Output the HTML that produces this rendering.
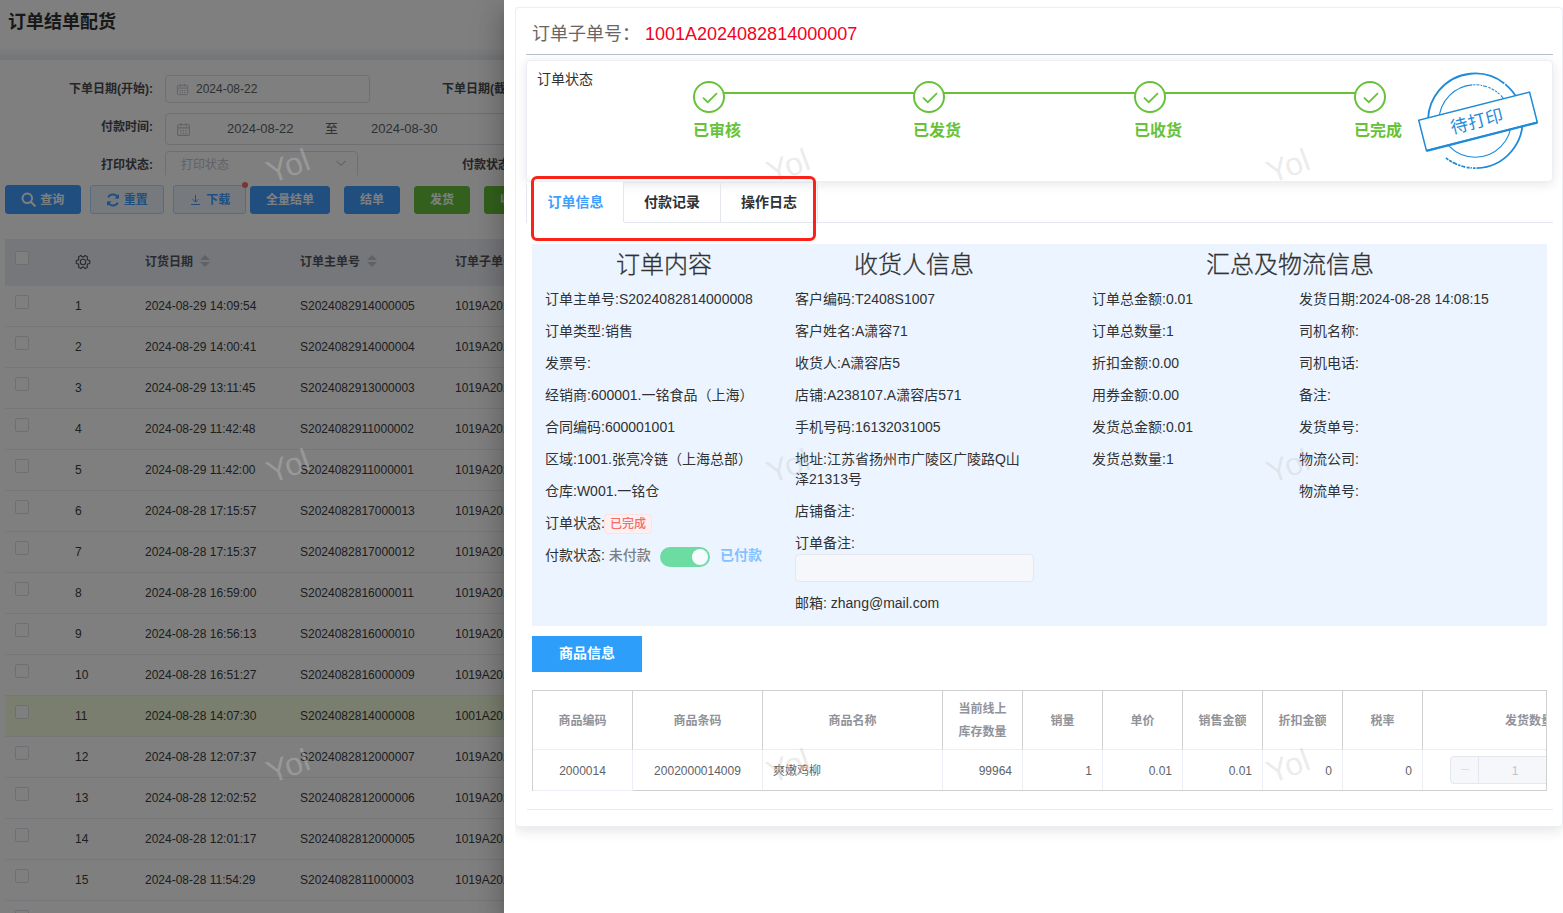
<!DOCTYPE html>
<html lang="zh-CN">
<head>
<meta charset="utf-8">
<title>订单结单配货</title>
<style>
*{box-sizing:border-box;margin:0;padding:0}
html,body{width:1563px;height:913px;overflow:hidden;background:#fff}
body{font-family:"Liberation Sans","Noto Sans CJK SC",sans-serif;font-size:12px;color:#606266;position:relative}
.abs{position:absolute}
/* ---------- left (dimmed) page ---------- */
#page{position:absolute;left:0;top:0;width:1563px;height:913px;background:#fff;overflow:hidden}
#page .hdr{position:absolute;left:0;top:0;width:100%;height:49px;background:#fff}
#page .band{position:absolute;left:0;top:49px;width:100%;height:11px;background:linear-gradient(#fafbfc,#e6e9ef)}
#page h1{position:absolute;left:8px;top:9px;font-size:18px;line-height:26px;font-weight:700;color:#303133;white-space:nowrap}
.flabel{position:absolute;font-weight:700;font-size:12px;color:#4a4c50;white-space:nowrap;line-height:20px}
.finput{position:absolute;border:1px solid #dcdfe6;border-radius:4px;background:#fff;color:#606266;white-space:nowrap}
.btn{position:absolute;top:185px;height:29px;border-radius:3px;font-size:12px;font-weight:700;color:#fff;line-height:29px;text-align:center;white-space:nowrap;border:1px solid transparent}
.btn.pri{background:#409eff;border-color:#409eff}
.btn.suc{background:#67c23a;border-color:#67c23a}
.btn.pla{background:#ecf5ff;border-color:#b3d8ff;color:#409eff}
.btn svg{vertical-align:middle;position:relative;top:-1px}
#ltable{position:absolute;left:5px;top:239px;width:1553px}
#ltable .th{position:absolute;left:0;top:0;width:100%;height:47px;background:#eceff6;font-weight:700;color:#54575c}
#ltable .tr{position:absolute;left:0;width:100%;height:41px;border-bottom:1px solid #ebeef5;color:#3a3c40}
#ltable .tr.sel{background:#f3fddc}
#ltable span{position:absolute;white-space:nowrap;line-height:20px}
.cb{position:absolute;left:10px;width:14px;height:14px;border:1px solid #dcdfe6;border-radius:2px;background:#fff}
.c1{left:70px}.c2{left:140px}.c3{left:295px}.c4{left:450px}
.sort{display:inline-block;position:relative;width:10px;height:14px;vertical-align:middle;margin-left:7px;top:-2px}
.sort:before,.sort:after{content:"";position:absolute;left:0;border:5px solid transparent}
.sort:before{top:-4px;border-bottom-color:#c0c4cc}
.sort:after{top:8px;border-top-color:#c0c4cc}
#mask{position:absolute;left:0;top:0;width:1563px;height:913px;background:rgba(0,0,0,.5)}
/* ---------- drawer ---------- */
#drawer{position:absolute;left:504px;top:0;width:1059px;height:913px;background:#fff;box-shadow:0 8px 10px -5px rgba(0,0,0,.2),0 16px 24px 2px rgba(0,0,0,.14),0 6px 30px 5px rgba(0,0,0,.12);overflow:hidden}

#clip{position:absolute;left:11px;top:7px;width:1048px;height:906px;overflow:hidden}
#card{position:absolute;left:0;top:0;width:1048px;height:820px;border:1px solid #ebeef5;border-radius:4px;background:#fff;box-shadow:0 3px 14px 0 rgba(0,0,0,.12)}
/* inside #card origin = (516,8) */
#ttl{position:absolute;left:16px;top:12px;font-size:18px;line-height:28px;color:#666;white-space:nowrap}
#ttl b{font-weight:400;color:#f5001d;position:absolute;left:113px;top:0}
#ttlline{position:absolute;left:10px;top:46px;width:1027px;height:1px;background:#b4c0d4}
#scard{position:absolute;left:10px;top:52px;width:1027px;height:122px;border:1px solid #ebeef5;border-radius:4px;background:#fff;box-shadow:0 2px 12px 0 rgba(0,0,0,.1)}
#scard .lab{position:absolute;left:10px;top:8px;font-size:14px;line-height:20px;color:#303133}
.step{position:absolute;top:20px;width:32px;height:32px;border:2px solid #67c23a;border-radius:50%;background:#fff}
.step svg{position:absolute;left:7px;top:9px}
.sline{position:absolute;top:31px;height:2px;background:#67c23a}
.stxt{position:absolute;top:59px;font-size:16px;line-height:22px;font-weight:700;color:#67c23a;white-space:nowrap}

#tabs{position:absolute;left:10px;top:174px;width:1027px;height:41px}
#tabs .bl{position:absolute;left:0;top:40px;width:1027px;height:1px;background:#e4e7ed}
#tabs .nav{position:absolute;left:0;top:0;height:41px;width:292px;border:1px solid #e4e7ed;border-bottom:none;border-radius:4px 4px 0 0}
#tabs .t{position:absolute;top:0;height:40px;width:97px;line-height:41px;font-size:14px;font-weight:700;color:#303133;text-align:center;white-space:nowrap}
#tabs .t+.t{border-left:1px solid #e4e7ed}
#tabs .t.on{color:#409eff;background:#fff;height:41px}
#panel{position:absolute;left:16px;top:236px;width:1015px;height:382px;background:#ecf5ff;color:#303133;font-size:14px}
#panel h2{position:absolute;top:7px;font-size:24px;line-height:28px;font-weight:300;color:#303133;text-align:center;white-space:nowrap;-webkit-text-stroke:.3px #303133}
#panel p{position:absolute;line-height:20px;white-space:nowrap}
.tag{display:inline-block;height:20px;line-height:18px;padding:0 5px;border:1px solid #fde2e2;background:#fef0f0;color:#f56c6c;font-size:12px;border-radius:4px;vertical-align:top;position:relative;top:1px;margin-left:-1px;font-weight:500}
.sw{position:absolute;left:128px;top:303px;width:50px;height:20px;border-radius:10px;background:#6ddca2}
.sw i{position:absolute;left:32px;top:2px;width:16px;height:16px;border-radius:50%;background:#f7faff}
#gbtn{position:absolute;left:16px;top:628px;width:110px;height:36px;background:#2d9ffb;color:#fff;font-size:14px;font-weight:700;line-height:35px;text-align:center}
#gt{position:absolute;left:16px;top:682px;width:1015px;height:101px;overflow:hidden;border:1px solid #d0d0d0;font-size:12px}
#gt .h{position:absolute;top:0;height:59px;border-right:1px solid #d0d0d0;border-bottom:1px solid #ebeef5;color:#909399;font-weight:700;text-align:center;line-height:23px}
#gt .h span{position:absolute;left:0;width:100%;top:50%;transform:translateY(-50%);margin-top:1px}
#gt .d{position:absolute;top:59px;height:40px;border-right:1px solid #ebeef5;color:#606266;line-height:42px;white-space:nowrap}
#gt .d.f{box-shadow:0 1px 0 #ebeef5}
#gt .r{text-align:right;padding-right:10px}
#gt .c{text-align:center}
#dvd{position:absolute;left:11px;top:801px;width:1026px;height:1px;background:#e6ebf2}

.wm{position:absolute;width:120px;height:40px;margin:-20px 0 0 -60px;line-height:40px;text-align:center;font-size:32px;color:rgba(200,200,200,.36);transform:rotate(-20deg);white-space:nowrap;pointer-events:none}
#redbox{position:absolute;left:531px;top:176px;width:285px;height:65px;border:3px solid #fb2219;border-radius:6px}
</style>
</head>
<body>
<div id="page">
  <div class="hdr"></div><div class="band"></div>
  <h1>订单结单配货</h1>

  <div class="flabel" style="right:1410px;top:79px">下单日期(开始):</div>
  <div class="finput" style="left:165px;top:75px;width:205px;height:28px"><svg class="abs" style="left:10px;top:7px" width="13" height="13" viewBox="0 0 14 14" fill="none" stroke="#c0c4cc" stroke-width="1"><rect x="1.5" y="2.5" width="11" height="10" rx="1"/><path d="M1.5 5.5h11M4.5 1v3M9.5 1v3"/><path d="M4 8h1.2M6.4 8h1.2M8.8 8H10M4 10.3h1.2M6.4 10.3h1.2M8.8 10.3H10" stroke-width="1.1"/></svg><span class="abs" style="left:30px;top:0;line-height:26px;font-size:12px">2024-08-22</span></div>
  <div class="flabel" style="left:442px;top:79px">下单日期(截止):</div>
  <div class="flabel" style="right:1410px;top:117px">付款时间:</div>
  <div class="finput" style="left:165px;top:113px;width:400px;height:32px"><svg class="abs" style="left:10px;top:8px" width="15" height="15" viewBox="0 0 14 14" fill="none" stroke="#c0c4cc" stroke-width="1"><rect x="1.5" y="2.5" width="11" height="10" rx="1"/><path d="M1.5 5.5h11M4.5 1v3M9.5 1v3"/><path d="M4 8h1.2M6.4 8h1.2M8.8 8H10M4 10.3h1.2M6.4 10.3h1.2M8.8 10.3H10" stroke-width="1.1"/></svg><span class="abs" style="left:61px;top:0;line-height:30px;font-size:13px">2024-08-22</span><span class="abs" style="left:159px;top:0;line-height:29px;font-size:13px">至</span><span class="abs" style="left:205px;top:0;line-height:30px;font-size:13px">2024-08-30</span></div>
  <div class="abs" style="left:0;top:148px;width:1563px;height:27px;overflow:hidden">
    <div class="flabel" style="right:1410px;top:7px">打印状态:</div>
    <div class="finput" style="left:165px;top:3px;width:193px;height:28px"><span class="abs" style="left:15px;top:0;line-height:26px;font-size:12px;color:#c0c4cc">打印状态</span><svg class="abs" style="left:169px;top:5px" width="12" height="12" viewBox="0 0 12 12" fill="none" stroke="#c0c4cc" stroke-width="1.1"><path d="M1.5 3.8 6 8.3l4.5-4.5"/></svg></div>
    <div class="flabel" style="left:462px;top:7px">付款状态:</div>
  </div>

  <div class="btn pri" style="left:5px;width:76px"><svg style="margin:0 1px 0 -1px" width="15" height="15" viewBox="0 0 15 15" fill="none" stroke="#fff" stroke-width="2"><circle cx="6.3" cy="6.3" r="4.8"/><path d="M9.8 9.8l4 4" stroke-linecap="round"/></svg> 查询</div>
  <div class="btn pla" style="left:90px;width:74px"><svg width="14" height="14" viewBox="0 0 14 14" fill="none" stroke="#409eff" stroke-width="2"><path d="M12 5.2A5.3 5.3 0 0 0 2.2 4.4"/><path d="M2 8.8a5.3 5.3 0 0 0 9.8 .8"/><path d="M13 1v4.6H8.4z" fill="#409eff" stroke="none"/><path d="M1 13V8.4h4.6z" fill="#409eff" stroke="none"/></svg> 重置</div>
  <div class="btn pla" style="left:173px;width:73px"><svg style="margin:0 2px 0 1px" width="11" height="12" viewBox="0 0 11 12" fill="none" stroke="#409eff" stroke-width="1"><path d="M5.5 1v7M2.5 5.2l3 3 3-3M1 10.5h9"/></svg> 下载</div>
  <div class="abs" style="left:242px;top:182px;width:6px;height:6px;border-radius:50%;background:#f56c6c"></div>
  <div class="btn pri" style="left:250px;width:80px;top:186px;height:28px;line-height:27px">全量结单</div>
  <div class="btn pri" style="left:344px;width:56px;top:186px;height:28px;line-height:27px">结单</div>
  <div class="btn suc" style="left:414px;width:56px;top:186px;height:28px;line-height:27px">发货</div>
  <div class="btn suc" style="left:484px;width:56px;top:186px;height:28px;line-height:27px">收货</div>
  <div id="ltable">
   <div class="th"><i class="cb" style="top:12px"></i><svg class="abs" style="left:70px;top:15px" width="16" height="16" viewBox="0 0 16 16" fill="none" stroke="#4e5156" stroke-width="1.1" stroke-linejoin="round"><circle cx="8" cy="8" r="2.7"/><path d="M12.85 6.14 L14.75 6.57 L14.75 9.43 L12.85 9.86 L12.04 11.27 L12.62 13.13 L10.13 14.56 L8.81 13.14 L7.19 13.14 L5.87 14.56 L3.38 13.13 L3.96 11.27 L3.15 9.86 L1.25 9.43 L1.25 6.57 L3.15 6.14 L3.96 4.73 L3.38 2.87 L5.87 1.44 L7.19 2.86 L8.81 2.86 L10.13 1.44 L12.62 2.87 L12.04 4.73Z"/></svg><span class="c2" style="top:13px">订货日期<i class="sort"></i></span><span class="c3" style="top:13px">订单主单号<i class="sort"></i></span><span class="c4" style="top:13px">订单子单号<i class="sort"></i></span></div>
   <div class="tr" style="top:47px"><i class="cb" style="top:9px"></i><span class="c1" style="top:10px">1</span><span class="c2" style="top:10px">2024-08-29 14:09:54</span><span class="c3" style="top:10px">S2024082914000005</span><span class="c4" style="top:10px">1019A2024082914000005</span></div>
   <div class="tr" style="top:88px"><i class="cb" style="top:9px"></i><span class="c1" style="top:10px">2</span><span class="c2" style="top:10px">2024-08-29 14:00:41</span><span class="c3" style="top:10px">S2024082914000004</span><span class="c4" style="top:10px">1019A2024082914000004</span></div>
   <div class="tr" style="top:129px"><i class="cb" style="top:9px"></i><span class="c1" style="top:10px">3</span><span class="c2" style="top:10px">2024-08-29 13:11:45</span><span class="c3" style="top:10px">S2024082913000003</span><span class="c4" style="top:10px">1019A2024082913000003</span></div>
   <div class="tr" style="top:170px"><i class="cb" style="top:9px"></i><span class="c1" style="top:10px">4</span><span class="c2" style="top:10px">2024-08-29 11:42:48</span><span class="c3" style="top:10px">S2024082911000002</span><span class="c4" style="top:10px">1019A2024082911000002</span></div>
   <div class="tr" style="top:211px"><i class="cb" style="top:9px"></i><span class="c1" style="top:10px">5</span><span class="c2" style="top:10px">2024-08-29 11:42:00</span><span class="c3" style="top:10px">S2024082911000001</span><span class="c4" style="top:10px">1019A2024082911000001</span></div>
   <div class="tr" style="top:252px"><i class="cb" style="top:9px"></i><span class="c1" style="top:10px">6</span><span class="c2" style="top:10px">2024-08-28 17:15:57</span><span class="c3" style="top:10px">S2024082817000013</span><span class="c4" style="top:10px">1019A2024082817000013</span></div>
   <div class="tr" style="top:293px"><i class="cb" style="top:9px"></i><span class="c1" style="top:10px">7</span><span class="c2" style="top:10px">2024-08-28 17:15:37</span><span class="c3" style="top:10px">S2024082817000012</span><span class="c4" style="top:10px">1019A2024082817000012</span></div>
   <div class="tr" style="top:334px"><i class="cb" style="top:9px"></i><span class="c1" style="top:10px">8</span><span class="c2" style="top:10px">2024-08-28 16:59:00</span><span class="c3" style="top:10px">S2024082816000011</span><span class="c4" style="top:10px">1019A2024082816000011</span></div>
   <div class="tr" style="top:375px"><i class="cb" style="top:9px"></i><span class="c1" style="top:10px">9</span><span class="c2" style="top:10px">2024-08-28 16:56:13</span><span class="c3" style="top:10px">S2024082816000010</span><span class="c4" style="top:10px">1019A2024082816000010</span></div>
   <div class="tr" style="top:416px"><i class="cb" style="top:9px"></i><span class="c1" style="top:10px">10</span><span class="c2" style="top:10px">2024-08-28 16:51:27</span><span class="c3" style="top:10px">S2024082816000009</span><span class="c4" style="top:10px">1019A2024082816000009</span></div>
   <div class="tr sel" style="top:457px"><i class="cb" style="top:9px"></i><span class="c1" style="top:10px">11</span><span class="c2" style="top:10px">2024-08-28 14:07:30</span><span class="c3" style="top:10px">S2024082814000008</span><span class="c4" style="top:10px">1001A2024082814000007</span></div>
   <div class="tr" style="top:498px"><i class="cb" style="top:9px"></i><span class="c1" style="top:10px">12</span><span class="c2" style="top:10px">2024-08-28 12:07:37</span><span class="c3" style="top:10px">S2024082812000007</span><span class="c4" style="top:10px">1019A2024082812000007</span></div>
   <div class="tr" style="top:539px"><i class="cb" style="top:9px"></i><span class="c1" style="top:10px">13</span><span class="c2" style="top:10px">2024-08-28 12:02:52</span><span class="c3" style="top:10px">S2024082812000006</span><span class="c4" style="top:10px">1019A2024082812000006</span></div>
   <div class="tr" style="top:580px"><i class="cb" style="top:9px"></i><span class="c1" style="top:10px">14</span><span class="c2" style="top:10px">2024-08-28 12:01:17</span><span class="c3" style="top:10px">S2024082812000005</span><span class="c4" style="top:10px">1019A2024082812000005</span></div>
   <div class="tr" style="top:621px"><i class="cb" style="top:9px"></i><span class="c1" style="top:10px">15</span><span class="c2" style="top:10px">2024-08-28 11:54:29</span><span class="c3" style="top:10px">S2024082811000003</span><span class="c4" style="top:10px">1019A2024082811000003</span></div>
   <div class="tr" style="top:662px"><i class="cb" style="top:9px"></i><span class="c1" style="top:10px">16</span><span class="c2" style="top:10px">2024-08-28 11:50:06</span><span class="c3" style="top:10px">S2024082811000002</span><span class="c4" style="top:10px">1019A2024082811000002</span></div>
  </div>
</div>
<div id="mask"></div>
<div id="drawer">
<div id="clip"><div id="card">
 <div id="ttl">订单子单号：<b>1001A2024082814000007</b></div>
 <div id="ttlline"></div>
 <div id="scard"><div class="lab">订单状态</div><div class="sline" style="left:182px;width:220px"></div><div class="sline" style="left:402px;width:221px"></div><div class="sline" style="left:623px;width:220px"></div><div class="step" style="left:166px"><svg width="16" height="12" viewBox="0 0 16 12" fill="none" stroke="#67c23a" stroke-width="1.7"><path d="M1 5.6 5.8 10.2 15 1.2"/></svg></div><div class="stxt" style="left:166px">已审核</div><div class="step" style="left:386px"><svg width="16" height="12" viewBox="0 0 16 12" fill="none" stroke="#67c23a" stroke-width="1.7"><path d="M1 5.6 5.8 10.2 15 1.2"/></svg></div><div class="stxt" style="left:386px">已发货</div><div class="step" style="left:607px"><svg width="16" height="12" viewBox="0 0 16 12" fill="none" stroke="#67c23a" stroke-width="1.7"><path d="M1 5.6 5.8 10.2 15 1.2"/></svg></div><div class="stxt" style="left:607px">已收货</div><div class="step" style="left:827px"><svg width="16" height="12" viewBox="0 0 16 12" fill="none" stroke="#67c23a" stroke-width="1.7"><path d="M1 5.6 5.8 10.2 15 1.2"/></svg></div><div class="stxt" style="left:827px">已完成</div><svg class="abs" style="left:880px;top:0" width="146" height="119" viewBox="1407 61 146 119">
<g fill="none" stroke="#1e8ad8">
<circle cx="1475.3" cy="120.8" r="47.3" stroke-width="1.8" transform="rotate(130 1475.3 120.8)" stroke-dasharray="0 12 134.5 1.2 114.8 1 2.5 1.2 1.2 1 3 1.5 4 1 2.2 1.2 5 1 3 1 3 100"/>
<circle cx="1475.2" cy="121" r="36.2" stroke-width="1.1" transform="rotate(-45 1475.2 121)" stroke-dasharray="195.9 1 2 1 3 1.2 1.5 1 4 1.5 2.5 1 3 1.2 2 1 2.5 100"/>
<g transform="rotate(-14.3 1478 121.3)">
<rect x="1420.8" y="105.7" width="114.4" height="31.2" fill="#fff" stroke-width="1.5"/>
<path d="M1420.8 137.2h114.4" stroke-width="2.2"/>
</g></g>
<text x="1477" y="127.4" transform="rotate(-14.3 1477 121.4)" text-anchor="middle" font-size="17.5" font-weight="400" fill="#1e8ad8" letter-spacing=".6" font-family="'Liberation Sans','Noto Sans CJK SC',sans-serif">待打印</text>
</svg></div>
<div id="tabs"><div class="bl"></div><div class="nav"></div><div class="t on" style="left:1px">订单信息</div><div class="t" style="left:97px">付款记录</div><div class="t" style="left:194px">操作日志</div></div>
<div id="panel"><h2 style="left:13px;width:238px">订单内容</h2><h2 style="left:263px;width:238px">收货人信息</h2><h2 style="left:513px;width:490px">汇总及物流信息</h2>
<p style="left:13px;top:45px">订单主单号:S2024082814000008</p>
<p style="left:13px;top:77px">订单类型:销售</p>
<p style="left:13px;top:109px">发票号:</p>
<p style="left:13px;top:141px">经销商:600001.一铭食品（上海）</p>
<p style="left:13px;top:173px">合同编码:600001001</p>
<p style="left:13px;top:205px">区域:1001.张亮冷链（上海总部）</p>
<p style="left:13px;top:237px">仓库:W001.一铭仓</p>
<p style="left:13px;top:269px">订单状态:<span class="tag">已完成</span></p>
<p style="left:13px;top:301px">付款状态: <span style="color:#7b7f85;font-weight:500">未付款</span></p>
<div class="sw"><i></i></div>
<p style="left:189px;top:301px"><span style="color:#85c1ff;font-weight:700;margin-left:-1px">已付款</span></p>
<p style="left:263px;top:45px">客户编码:T2408S1007</p>
<p style="left:263px;top:77px">客户姓名:A潇容71</p>
<p style="left:263px;top:109px">收货人:A潇容店5</p>
<p style="left:263px;top:141px">店铺:A238107.A潇容店571</p>
<p style="left:263px;top:173px">手机号码:16132031005</p>
<p style="left:263px;top:205px">地址:江苏省扬州市广陵区广陵路Q山<br>泽21313号</p>
<p style="left:263px;top:257px">店铺备注:</p>
<p style="left:263px;top:289px">订单备注:</p>
<div class="abs" style="left:263px;top:310px;width:239px;height:28px;border:1px solid #e4e7ed;border-radius:4px;background:#f5f7fa"></div>
<p style="left:263px;top:349px">邮箱: zhang@mail.com</p>
<p style="left:560px;top:45px">订单总金额:0.01</p>
<p style="left:560px;top:77px">订单总数量:1</p>
<p style="left:560px;top:109px">折扣金额:0.00</p>
<p style="left:560px;top:141px">用券金额:0.00</p>
<p style="left:560px;top:173px">发货总金额:0.01</p>
<p style="left:560px;top:205px">发货总数量:1</p>
<p style="left:767px;top:45px">发货日期:2024-08-28 14:08:15</p>
<p style="left:767px;top:77px">司机名称:</p>
<p style="left:767px;top:109px">司机电话:</p>
<p style="left:767px;top:141px">备注:</p>
<p style="left:767px;top:173px">发货单号:</p>
<p style="left:767px;top:205px">物流公司:</p>
<p style="left:767px;top:237px">物流单号:</p>
</div>
<div id="gbtn">商品信息</div>
<div id="gt"><div class="h" style="left:0px;width:100px"><span>商品编码</span></div><div class="d c" style="left:0px;width:100px">2000014</div><div class="h" style="left:100px;width:130px"><span>商品条码</span></div><div class="d c" style="left:100px;width:130px">2002000014009</div><div class="h" style="left:230px;width:180px"><span>商品名称</span></div><div class="d" style="left:230px;width:180px;padding-left:10px">爽嫩鸡柳</div><div class="h" style="left:410px;width:80px"><span>当前线上<br>库存数量</span></div><div class="d r" style="left:410px;width:80px">99964</div><div class="h" style="left:490px;width:80px"><span>销量</span></div><div class="d r" style="left:490px;width:80px">1</div><div class="h" style="left:570px;width:80px"><span>单价</span></div><div class="d r" style="left:570px;width:80px">0.01</div><div class="h" style="left:650px;width:80px"><span>销售金额</span></div><div class="d r" style="left:650px;width:80px">0.01</div><div class="h" style="left:730px;width:80px"><span>折扣金额</span></div><div class="d r" style="left:730px;width:80px">0</div><div class="h" style="left:810px;width:80px"><span>税率</span></div><div class="d r" style="left:810px;width:80px">0</div><div class="h" style="left:890px;width:212px;border-right:none"><span>发货数量</span></div><div class="d" style="left:890px;width:212px;border-right:none"><div class="abs" style="left:27px;top:6px;width:130px;height:28px;border:1px solid #e4e7ed;border-radius:4px;background:#f5f7fa;color:#c0c4cc;line-height:28px;text-align:center">1<div class="abs" style="left:0;top:0;width:28px;height:26px;border-right:1px solid #e4e7ed"><i class="abs" style="left:10px;top:12px;width:8px;height:1px;background:#dcdfe6"></i></div></div></div></div>
<div class="abs" style="left:17px;top:782px;width:100px;height:1px;background:#ebeef5"></div>
<div id="dvd"></div>
</div></div>
</div>
<div class="wm" style="left:288px;top:166px">Yol</div><div class="wm" style="left:788px;top:166px">Yol</div><div class="wm" style="left:1288px;top:166px">Yol</div><div class="wm" style="left:288px;top:466px">Yol</div><div class="wm" style="left:788px;top:466px">Yol</div><div class="wm" style="left:1288px;top:466px">Yol</div><div class="wm" style="left:288px;top:766px">Yol</div><div class="wm" style="left:788px;top:766px">Yol</div><div class="wm" style="left:1288px;top:766px">Yol</div>
<div id="redbox"></div>
</body>
</html>
